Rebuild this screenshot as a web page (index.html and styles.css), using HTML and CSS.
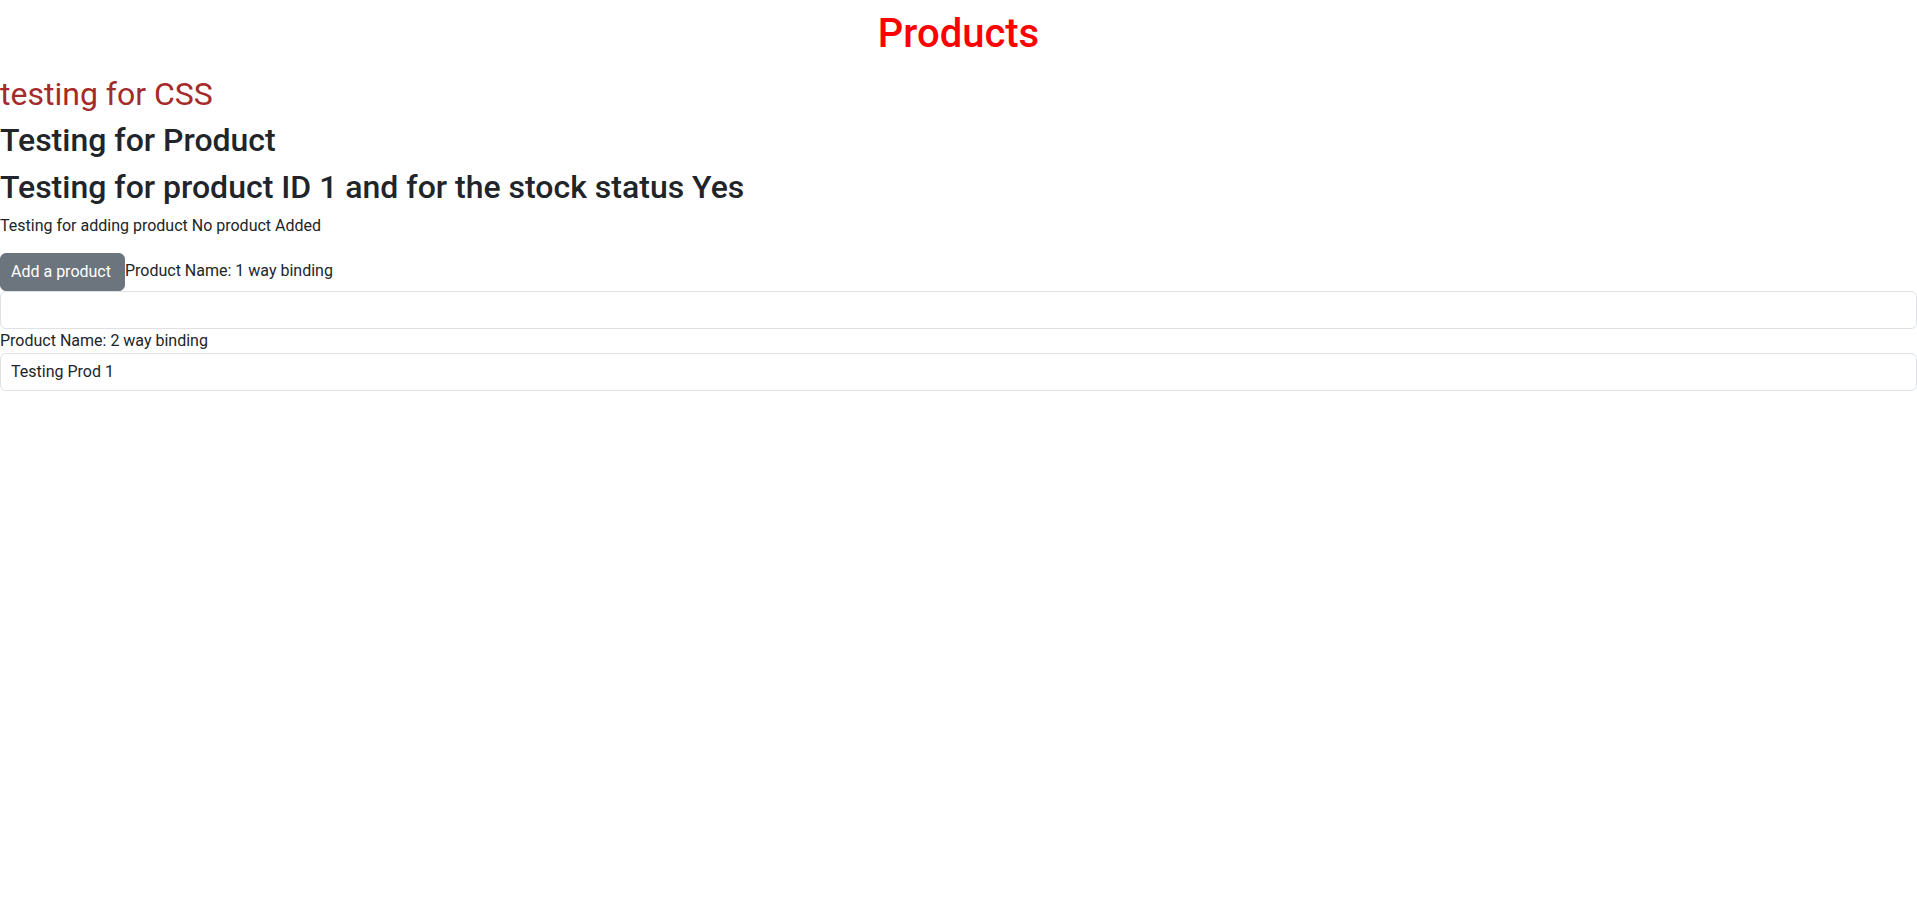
FILE: index.html
```html
<!DOCTYPE html>
<html lang="en">
<head>
<meta charset="utf-8">
<title>Products</title>
<link rel="stylesheet" href="styles.css">
</head>
<body>
<h1 class="page-title">Products</h1>
<h2 class="css-test">testing for CSS</h2>
<h2 class="heading">Testing for Product</h2>
<h2 class="heading">Testing for product ID 1 and for the stock status Yes</h2>
<p class="status">Testing for adding product No product Added</p>
<button class="btn btn-secondary" type="button">Add a product</button><label class="form-label" for="name1">Product Name: 1 way binding</label>
<input class="form-control" id="name1" type="text" value="">
<label class="form-label" for="name2">Product Name: 2 way binding</label>
<input class="form-control" id="name2" type="text" value="Testing Prod 1">
</body>
</html>
```
FILE: styles.css
```css
*, *::before, *::after { box-sizing: border-box; }

body {
  margin: 0;
  font-family: Roboto, "Liberation Sans", sans-serif;
  font-size: 16px;
  font-weight: 400;
  line-height: 1.5;
  color: #212529;
  background: #fff;
}

.page-title {
  margin: 10px 0 17px;
  font-size: 40px;
  font-weight: 500;
  line-height: 1.2;
  color: #ff0000;
  text-align: center;
}

.css-test,
.heading {
  margin: 0 0 8px;
  font-size: 32px;
  line-height: 1.2;
}

.css-test {
  font-weight: 400;
  color: #a52a2a;
}

.heading {
  font-weight: 500;
  color: #212529;
}

.status {
  margin: 0 0 15px;
}

.btn {
  display: inline-block;
  padding: 6px 13px 6px 10px;
  font-family: inherit;
  font-size: 16px;
  font-weight: 400;
  line-height: 1.5;
  text-align: center;
  vertical-align: middle;
  border: 1px solid transparent;
  border-radius: 6px;
  cursor: pointer;
}

.btn-secondary {
  color: #fff;
  background-color: #6c757d;
  border-color: #6c757d;
}

.form-label {
  display: inline-block;
}

.form-control {
  display: block;
  width: 100%;
  padding: 6px 12px 6px 10px;
  font-family: inherit;
  font-size: 16px;
  font-weight: 400;
  line-height: 1.5;
  color: #212529;
  background-color: #fff;
  border: 1px solid #dee2e6;
  border-radius: 6px;
  outline: none;
}
```
